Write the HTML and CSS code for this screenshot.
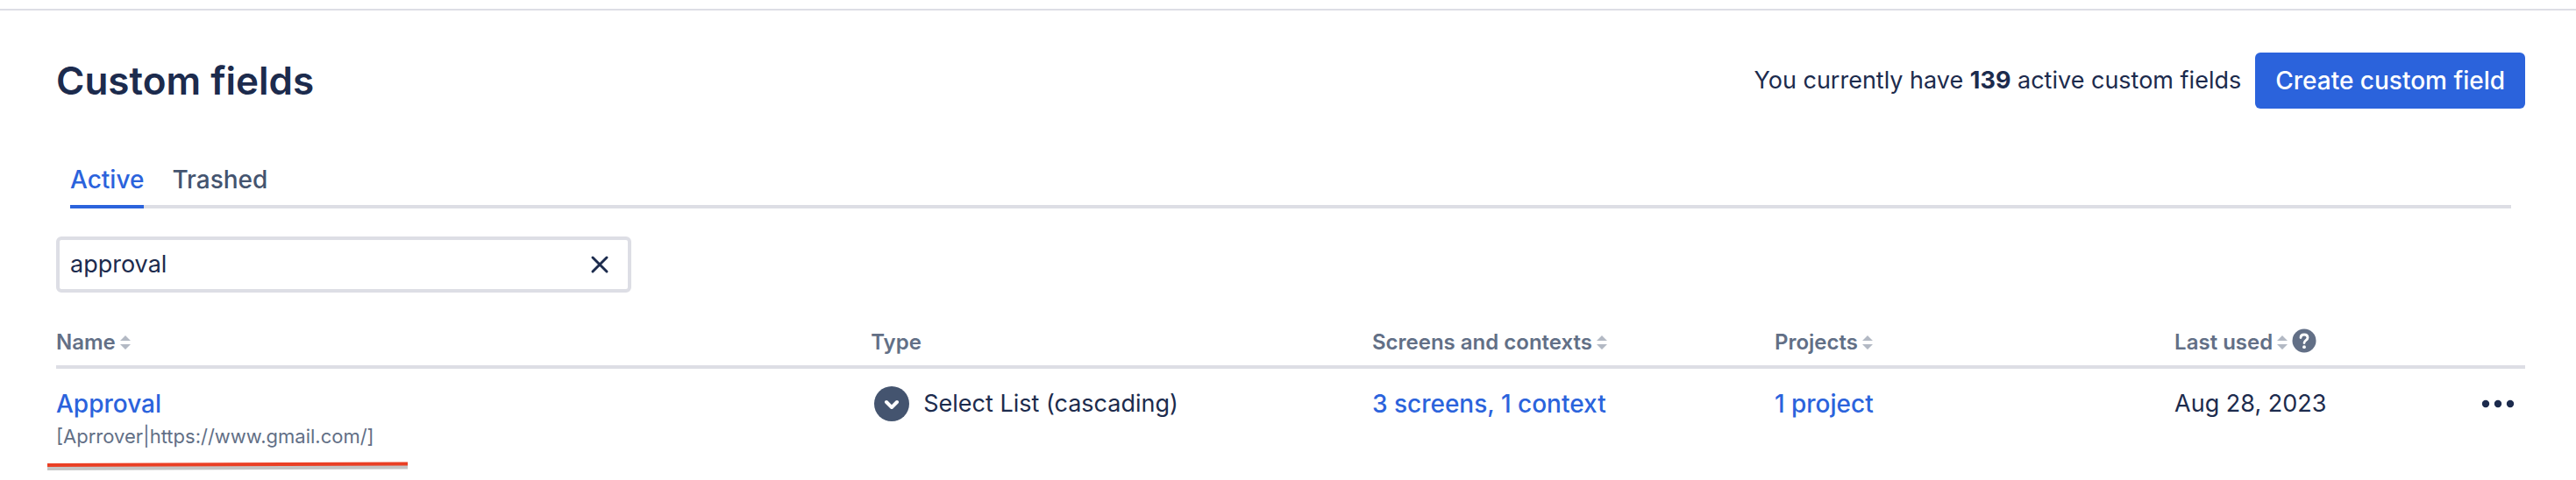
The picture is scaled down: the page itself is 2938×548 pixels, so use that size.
FILE: index.html
```html
<!DOCTYPE html>
<html lang="en">
<head>
    <meta charset="UTF-8">
    <meta name="viewport" content="width=device-width, initial-scale=1.0">
    <title>Custom fields</title>
    <link rel="stylesheet" href="styles.css">
</head>
<body>
    <div class="top-bar"></div>
    <main class="page">
        <header class="page-header">
            <h1>Custom fields</h1>
            <div class="page-actions">
                <p>You currently have <strong>139</strong> active custom fields</p>
                <button type="button" class="btn-primary">Create custom field</button>
            </div>
        </header>

        <div class="tabs" role="tablist">
            <button type="button" class="tab current-tab" role="tab" aria-selected="true">Active</button>
            <button type="button" class="tab" role="tab" aria-selected="false">Trashed</button>
        </div>

        <form class="search-box">
            <input type="text" value="approval" aria-label="Search custom fields">
            <button type="button" class="icon-btn" aria-label="Clear search">
                <svg width="24" height="24" viewBox="0 0 24 24">
                    <path d="M4 4L20 20M20 4L4 20" fill="none" stroke="currentColor" stroke-width="3" stroke-linecap="round"/>
                </svg>
            </button>
        </form>

        <table class="fields-table">
            <colgroup>
                <col class="col-name">
                <col class="col-type">
                <col class="col-screens">
                <col class="col-projects">
                <col class="col-used">
                <col class="col-actions">
            </colgroup>
            <thead>
                <tr>
                    <th>
                        <div class="th-inner">Name
                            <svg class="sort" width="12" height="18" viewBox="0 0 12 18"><path d="M6 1L12 7H0zM6 17L0 11H12z"/></svg>
                        </div>
                    </th>
                    <th>
                        <div class="th-inner">Type</div>
                    </th>
                    <th>
                        <div class="th-inner">Screens and contexts
                            <svg class="sort" width="12" height="18" viewBox="0 0 12 18"><path d="M6 1L12 7H0zM6 17L0 11H12z"/></svg>
                        </div>
                    </th>
                    <th>
                        <div class="th-inner">Projects
                            <svg class="sort" width="12" height="18" viewBox="0 0 12 18"><path d="M6 1L12 7H0zM6 17L0 11H12z"/></svg>
                        </div>
                    </th>
                    <th>
                        <div class="th-inner">Last used
                            <svg class="sort" width="12" height="18" viewBox="0 0 12 18"><path d="M6 1L12 7H0zM6 17L0 11H12z"/></svg>
                            <svg class="help" width="28" height="32" viewBox="0 0 28 32">
                                <circle cx="14" cy="14" r="13.5" fill="currentColor"/>
                                <path d="M10 10.6C10 8.2 11.7 7 14 7C16.4 7 18 8.4 18 10.4C18 13.4 14 13.2 14 16.6" fill="none" stroke="#fff" stroke-width="2.8" stroke-linecap="round"/>
                                <circle cx="14" cy="21.2" r="1.9" fill="#fff"/>
                            </svg>
                        </div>
                    </th>
                    <th></th>
                </tr>
            </thead>
            <tbody>
                <tr>
                    <td>
                        <a href="#">Approval</a>
                        <p class="description">[Aprrover|https://www.gmail.com/]</p>
                        <svg class="marker" width="411" height="14" viewBox="0 0 411 14">
                            <path d="M0 8.5L411 7" stroke="#c4c4c4" stroke-width="5"/>
                            <path d="M0 5L411 3.5" stroke="#ea3f24" stroke-width="4"/>
                        </svg>
                    </td>
                    <td>
                        <div class="field-type">
                            <svg width="40" height="40" viewBox="0 0 40 40">
                                <circle cx="20" cy="20" r="20" fill="#44546f"/>
                                <path d="M14 18L20 24L26 18" fill="none" stroke="#fff" stroke-width="4" stroke-linecap="round" stroke-linejoin="round"/>
                            </svg>
                            <span>Select List (cascading)</span>
                        </div>
                    </td>
                    <td><a href="#">3 screens, 1 context</a></td>
                    <td><a href="#">1 project</a></td>
                    <td>Aug 28, 2023</td>
                    <td class="actions-cell">
                        <button type="button" class="icon-btn" aria-label="More actions">
                            <svg width="40" height="12" viewBox="0 0 40 12" fill="currentColor">
                                <circle cx="6" cy="6" r="4.2"/>
                                <circle cx="20" cy="6" r="4.2"/>
                                <circle cx="34" cy="6" r="4.2"/>
                            </svg>
                        </button>
                    </td>
                </tr>
            </tbody>
        </table>
    </main>
</body>
</html>
```
FILE: styles.css
```css
* {
    box-sizing: border-box;
}
body {
    margin: 0;
    background: #fff;
    color: #1c2b4d;
    font-family: Inter, "Liberation Sans", sans-serif;
    font-size: 27px;
    line-height: 40px;
}
h1, p {
    margin: 0;
}
button, input {
    font: inherit;
    color: inherit;
}
button {
    border: none;
    padding: 0;
    background: none;
    cursor: pointer;
}
svg {
    display: block;
    flex-shrink: 0;
}
a, .tab, .btn-primary {
    font-size: 28px;
    font-weight: 500;
}
a {
    color: #2b63dc;
    text-decoration: none;
}
.top-bar {
    height: 12px;
    border-bottom: 2px solid #dddee5;
}
.page {
    padding: 48px 58px 0 64px;
}
.page-header {
    display: flex;
    align-items: center;
    justify-content: space-between;
    height: 64px;
}
h1 {
    font-size: 44px;
    line-height: 56px;
    font-weight: 600;
}
.page-actions {
    display: flex;
    align-items: center;
    gap: 16px;
}
.btn-primary {
    height: 64px;
    padding: 0 23px;
    border-radius: 6px;
    background: #2b63dc;
    color: #fff;
}
.tabs {
    display: flex;
    gap: 32px;
    margin: 56px 16px 0;
    border-bottom: 4px solid #dddee5;
}
.tab {
    height: 58px;
    margin-bottom: -4px;
    padding-bottom: 4px;
    border-bottom: 4px solid transparent;
    color: #44546f;
}
.current-tab {
    border-color: #2b63dc;
    color: #2b63dc;
}
.search-box {
    display: flex;
    align-items: center;
    width: 656px;
    height: 64px;
    margin-top: 32px;
    padding: 0 20px 0 12px;
    border: 4px solid #dddee5;
    border-radius: 6px;
}
.search-box input {
    flex: 1;
    min-width: 0;
    padding: 0;
    border: none;
    outline: none;
    background: none;
}
.fields-table {
    width: 100%;
    margin-top: 32px;
    border-collapse: separate;
    border-spacing: 0;
    table-layout: fixed;
}
.col-name {
    width: 33%;
}
.col-type {
    width: 20.3%;
}
.col-screens {
    width: 16.3%;
}
.col-projects {
    width: 16.2%;
}
.col-used {
    width: 10%;
}
th, td {
    padding: 0;
    text-align: left;
    vertical-align: top;
}
th {
    height: 55px;
    padding-top: 9px;
    border-bottom: 4px solid #dddee5;
    color: #626f86;
    font-size: 24px;
    line-height: 32px;
    font-weight: 600;
}
td {
    padding-top: 20px;
}
.th-inner {
    display: flex;
    align-items: center;
    gap: 5px;
}
.sort {
    fill: #b3b9c4;
}
.description {
    color: #626f86;
    font-size: 22px;
    line-height: 32px;
}
/* red marker line under the field description */
.marker {
    margin: 12px 0 0 -10px;
}
.field-type {
    display: flex;
    align-items: center;
    gap: 16px;
    padding-left: 4px;
}
.actions-cell .icon-btn {
    display: flex;
    align-items: center;
    height: 40px;
    margin: 0 11px 0 auto;
}
```
